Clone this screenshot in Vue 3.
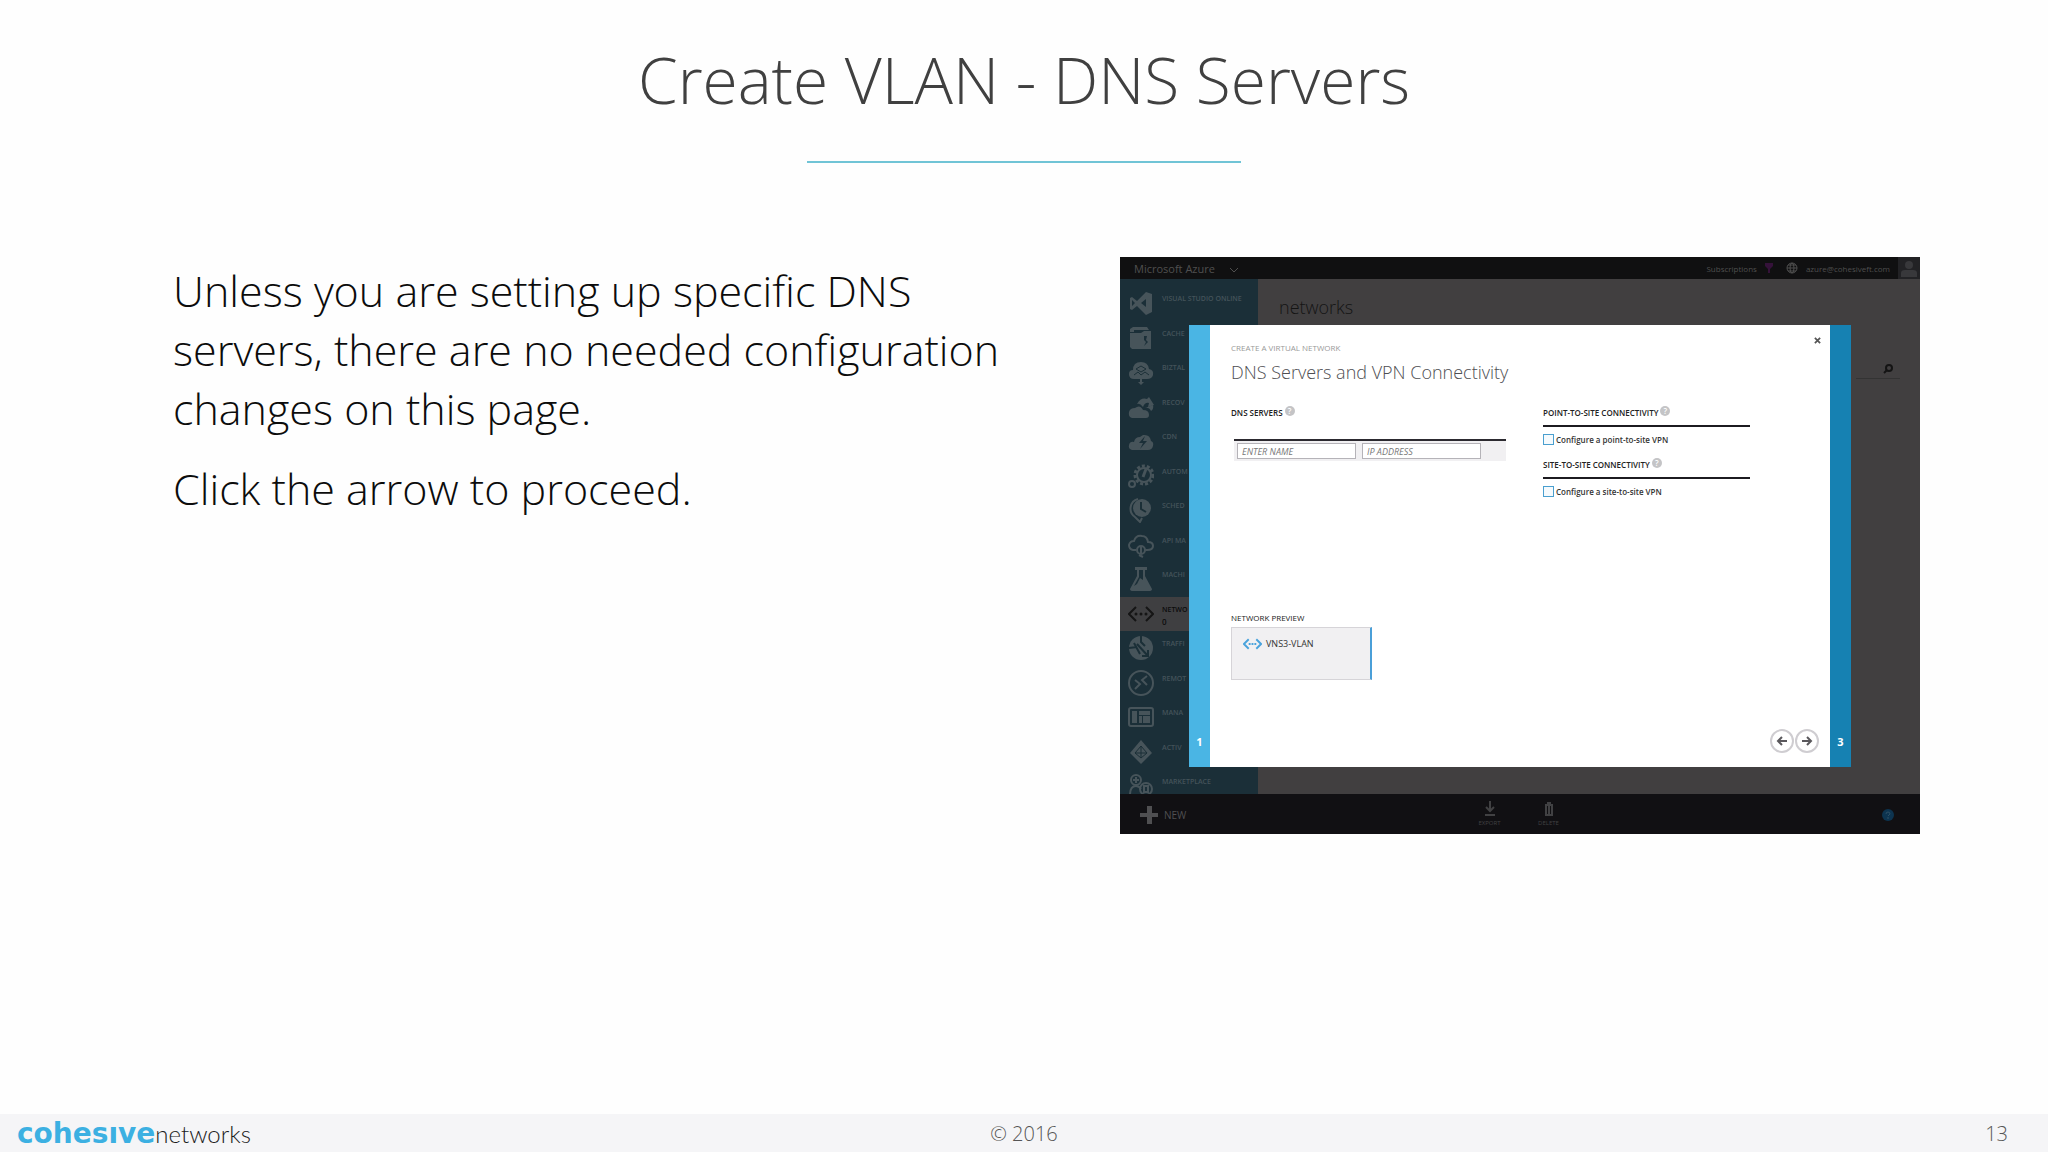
<script setup>
const services = [
  { label: 'VISUAL STUDIO ONLINE', icon: 'vs' },
  { label: 'CACHE', icon: 'cache' },
  { label: 'BIZTAL', icon: 'biztalk' },
  { label: 'RECOV', icon: 'recovery' },
  { label: 'CDN', icon: 'cdn' },
  { label: 'AUTOM', icon: 'automation' },
  { label: 'SCHED', icon: 'scheduler' },
  { label: 'API MA', icon: 'api' },
  { label: 'MACHI', icon: 'flask' },
  { label: 'NETWO', icon: 'networks', count: 0, active: true },
  { label: 'TRAFFI', icon: 'traffic' },
  { label: 'REMOT', icon: 'remote' },
  { label: 'MANA', icon: 'management' },
  { label: 'ACTIV', icon: 'directory' },
  { label: 'MARKETPLACE', icon: 'market' }
]
</script>

<template>
  <div class="slide">
    <header class="heading">
      <h1>Create VLAN - DNS Servers</h1>
      <hr />
    </header>

    <main class="content">
      <section class="copy">
        <p>Unless you are setting up specific DNS servers, there are no needed configuration changes on this page.</p>
        <p>Click the arrow to proceed.</p>
      </section>

      <section class="portal" aria-label="Microsoft Azure portal">
        <div class="topbar">
          <span class="brand">Microsoft Azure</span>
          <svg class="chev" viewBox="0 0 10 6"><path d="M1 1l4 4 4-4" fill="none" stroke="currentColor" /></svg>
          <span class="push">Subscriptions</span>
          <svg class="filter" viewBox="0 0 10 12"><path d="M1 1h8v3L6 7v4H4V7L1 4z" fill="#35123a" /></svg>
          <svg class="globe" viewBox="0 0 12 12" fill="none" stroke="currentColor"><circle cx="6" cy="6" r="5" /><ellipse cx="6" cy="6" rx="2" ry="5" /><path d="M1 6h10M2 3h8M2 9h8" /></svg>
          <span class="mail">azure@cohesiveft.com</span>
          <span class="avatar"><svg viewBox="0 0 18 20"><circle cx="9" cy="7" r="4" /><path d="M1 19v-4q0-3 4-3h8q4 0 4 3v4z" /></svg></span>
        </div>

        <div class="workspace">
          <nav class="sidebar">
            <ul>
              <li v-for="s in services" :key="s.label" :class="{ active: s.active }">
                <svg viewBox="0 0 26 26" fill="currentColor">
                  <path v-if="s.icon === 'vs'" fill-rule="evenodd" d="M18 2l6 2v18l-6 3-9-9-5 4-2-1V8l2-1 5 4zM18 9l-5 4 5 4zM4 10v6l3-3z" />
                  <g v-else-if="s.icon === 'cache'">
                    <path d="M5 2h14l2 3H6v2H2V4z" />
                    <path fill-rule="evenodd" d="M2 8h11l3-2h7v18H4l-2-2zM16 11v4l2 2-2 4 4-4-2-2 1-4z" />
                  </g>
                  <g v-else-if="s.icon === 'biztalk'">
                    <path d="M6 20q-5 0-5-5 0-4 4-4 0-8 8-8 7 0 8 7 5 1 4 6-1 4-6 4z" />
                    <path d="M8 10l5-3 5 3-5 3zM6 16l4-3 3 3 4-3 4 3" fill="none" stroke="#1b2f37" />
                    <path d="M12 20h2v3h2l-3 3-3-3h2z" />
                  </g>
                  <g v-else-if="s.icon === 'recovery'">
                    <path d="M4 24q-4-1-3-6 1-4 6-4 5-4 8 2 6 0 6 5 0 3-3 3z" />
                    <path d="M9 10q4-7 10-5l2-2 5 8-6 2 1-4q-4-1-6 4-3-4-6-3z" />
                    <path d="M17 14q4-1 6 3 3-2 2-6z" />
                  </g>
                  <path v-else-if="s.icon === 'cdn'" fill-rule="evenodd" d="M4 22q-4-1-3-5 1-4 5-3 1-5 6-5l3-2q7-1 8 6 3 1 2 5-1 4-5 4zM17 8l-6 7h4l-3 6 7-8h-4z" />
                  <g v-else-if="s.icon === 'automation'" fill="none" stroke="currentColor">
                    <circle cx="16" cy="12" r="9" stroke-width="3" stroke-dasharray="3 2" />
                    <circle cx="16" cy="12" r="7" stroke-width="2" />
                    <path d="M15 14l3-8" stroke-width="3" />
                    <circle cx="4" cy="21" r="3" stroke-width="2" />
                  </g>
                  <g v-else-if="s.icon === 'scheduler'">
                    <path d="M10 2A10 10 0 0 0 7 20l5 5 2-4" fill="none" stroke="currentColor" stroke-width="2" />
                    <circle cx="14" cy="11" r="9" />
                    <path d="M13 5v7l5 3" fill="none" stroke="#1b2f37" stroke-width="2" />
                  </g>
                  <g v-else-if="s.icon === 'api'" fill="none" stroke="currentColor" stroke-width="2">
                    <path d="M8 18H5q-4-1-4-5 1-4 5-4 2-6 8-5 5 0 6 6 5 0 5 4 0 4-6 4h-2" />
                    <circle cx="13" cy="18" r="4" /><path d="M13 15v6M11 23l4 2" />
                  </g>
                  <path v-else-if="s.icon === 'flask'" fill-rule="evenodd" d="M7 1h12v3h-2v6l7 13q0 2-3 2H5q-3 0-3-2l7-13V4H7zM11 4v7l-5 9 3-2 3-6 3 2V4z" />
                  <g v-else-if="s.icon === 'networks'">
                    <path d="M8 6l-7 7 7 7M18 6l7 7-7 7" fill="none" stroke="currentColor" stroke-width="2" />
                    <circle cx="8" cy="13" r="1.5" /><circle cx="13" cy="13" r="1.5" /><circle cx="18" cy="13" r="1.5" />
                  </g>
                  <g v-else-if="s.icon === 'traffic'">
                    <circle cx="13" cy="13" r="12" />
                    <path d="M13 1v6l4 4M1 13l8-1M9 9l11 12M20 15v6h-6M6 8l6 11" fill="none" stroke="#1b2f37" stroke-width="2" />
                  </g>
                  <g v-else-if="s.icon === 'remote'" fill="none" stroke="currentColor">
                    <circle cx="13" cy="13" r="12" stroke-width="2" />
                    <path d="M7 10l5 4-5 5M19 6l-5 4 5 5" stroke-width="2" />
                  </g>
                  <g v-else-if="s.icon === 'management'">
                    <rect x="1" y="4" width="24" height="18" rx="2" fill="none" stroke="currentColor" stroke-width="2" />
                    <path d="M4 7h5v12H4zM11 7h11v4H11zM11 12h3v7h-3zM15 12h7v7h-7z" />
                  </g>
                  <g v-else-if="s.icon === 'directory'">
                    <path d="M13 1l11 13-11 11L2 14z" />
                    <path d="M13 7l-6 7 6 5 6-5zM13 7v12M7 14h12" fill="none" stroke="#1b2f37" />
                  </g>
                  <g v-else fill="none" stroke="currentColor" stroke-width="2">
                    <circle cx="8" cy="7" r="5" /><path d="M2 22q0-9 6-9 3 0 5 3M8 4v6M5 7h6" />
                    <circle cx="18" cy="16" r="6" /><path d="M16 13v6h4v-6z" />
                  </g>
                </svg>
                <span>{{ s.label }}<small v-if="s.active">{{ s.count }}</small></span>
              </li>
            </ul>
          </nav>
          <div class="page">
            <h2>networks</h2>
            <div class="search"><svg viewBox="0 0 10 10" fill="none" stroke="currentColor" stroke-width="2"><circle cx="6" cy="4" r="3" /><path d="M4 6L1 9" /></svg></div>
          </div>
        </div>

        <div class="commands">
          <button class="new"><svg viewBox="0 0 18 18"><path d="M7 0h5v7h6v4h-6v7H7v-7H0V7h7z" fill="currentColor" /></svg>NEW</button>
          <div class="actions">
            <button><svg viewBox="0 0 14 16" fill="none" stroke="currentColor" stroke-width="2"><path d="M7 0v10M3 6l4 4 4-4M2 14h10" /></svg>EXPORT</button>
            <button><svg viewBox="0 0 14 16" fill="none" stroke="currentColor" stroke-width="2"><path d="M4 4h6v10H4zM5 2h4M7 5v8" /></svg>DELETE</button>
          </div>
          <button class="help" aria-label="Help"><svg viewBox="0 0 12 12"><circle cx="6" cy="6" r="6" fill="#0d3450" /><path d="M4 5q0-2 2-2t2 2L6 7M6 8v2" fill="none" stroke="#2e5065" /></svg></button>
        </div>

        <div class="dialog" role="dialog" aria-labelledby="dialog-title">
          <div class="step prev">1</div>
          <form class="form" @submit.prevent>
            <button type="button" class="close" aria-label="Close"><svg viewBox="0 0 8 8"><path d="M1 1l6 6M7 1L1 7" stroke="currentColor" stroke-width="2" /></svg></button>
            <div class="kicker">CREATE A VIRTUAL NETWORK</div>
            <h3 id="dialog-title">DNS Servers and VPN Connectivity</h3>
            <div class="cols">
              <fieldset class="dns">
                <legend>DNS SERVERS<i class="q">?</i></legend>
                <div class="row">
                  <input type="text" placeholder="ENTER NAME" aria-label="DNS server name" />
                  <input type="text" placeholder="IP ADDRESS" aria-label="DNS server IP address" />
                </div>
              </fieldset>
              <div class="vpn">
                <fieldset>
                  <legend>POINT-TO-SITE CONNECTIVITY<i class="q">?</i></legend>
                  <label><input type="checkbox" />Configure a point-to-site VPN</label>
                </fieldset>
                <fieldset>
                  <legend>SITE-TO-SITE CONNECTIVITY<i class="q">?</i></legend>
                  <label><input type="checkbox" />Configure a site-to-site VPN</label>
                </fieldset>
              </div>
            </div>
            <div class="preview">
              <h4>NETWORK PREVIEW</h4>
              <div class="card">
                <svg viewBox="0 0 20 12"><path d="M6 1L1 6l5 5M14 1l5 5-5 5" fill="none" stroke="#4aa3dc" stroke-width="2" /><path d="M6 5h2v2H6zM9 5h2v2H9zM12 5h2v2h-2z" fill="#4aa3dc" /></svg>
                VNS3-VLAN
              </div>
            </div>
            <div class="pager">
              <button type="button" aria-label="Back"><svg viewBox="0 0 24 24"><circle cx="12" cy="12" r="11" /><path d="M17 12H8M12 8l-4 4 4 4" /></svg></button>
              <button type="button" aria-label="Next"><svg viewBox="0 0 24 24"><circle cx="12" cy="12" r="11" /><path d="M7 12h9M12 8l4 4-4 4" /></svg></button>
            </div>
          </form>
          <div class="step next">3</div>
        </div>
      </section>
    </main>

    <footer class="footer">
      <div class="logo" aria-label="cohesive networks"><b>cohesıve</b><span>networks</span></div>
      <span>© 2016</span>
      <span class="number">13</span>
    </footer>
  </div>
</template>

<style>
body { margin: 0; background: #fefefe; }
</style>

<style scoped>
* { box-sizing: border-box; }
.slide { min-height: 100vh; display: flex; flex-direction: column; font-family: "Open Sans", "Noto Sans", sans-serif; color: #0c0c0c; }
h1, h2, h3, h4, p, ul, fieldset { margin: 0; padding: 0; border: 0; min-width: 0; }
h1, h2, h3 { font-weight: 300; }
button { border: 0; padding: 0; background: none; font: inherit; color: inherit; display: flex; align-items: center; }
svg { display: block; flex: none; }

.heading { padding-top: 36px; text-align: center; }
h1 { font-size: 64px; line-height: 88px; color: #404040; }
hr { width: 434px; height: 2px; margin: 37px auto 0; border: 0; background: #70c4d6; }

.content { flex: 1; display: flex; align-items: flex-start; justify-content: space-between; padding: 94px 128px 40px 173px; }
.copy { flex: 0 1 840px; padding-top: 4px; font-size: 43px; line-height: 59px; font-weight: 300; }
.copy p + p { margin-top: 21px; }

.portal { position: relative; flex: 0 1 800px; overflow: hidden; background: #111013; color: #555; }
.topbar { display: flex; align-items: center; height: 22px; font-size: 8px; background: #101011; color: #4f4f4f; }
.brand { margin-left: 14px; font-size: 11px; }
.chev { width: 10px; height: 6px; margin: 3px 0 0 14px; }
.push { margin-left: auto; }
.filter { width: 10px; height: 12px; margin: 0 12px 0 7px; }
.globe { width: 12px; height: 12px; margin-right: 8px; }
.avatar { width: 22px; height: 22px; margin-left: 8px; padding: 1px 2px; background: #222225; }
.avatar svg { width: 18px; height: 20px; fill: #38383b; }

.workspace { display: flex; height: 515px; overflow: hidden; }
.sidebar { width: 138px; padding-top: 7px; background: #1b2f38; }
.sidebar ul { display: grid; grid-auto-rows: 1fr; height: 518px; list-style: none; }
.sidebar li { display: flex; gap: 8px; padding: 4px 0 0 8px; font-size: 7px; font-weight: 600; line-height: 18px; white-space: nowrap; color: #44535a; }
.sidebar li svg { width: 26px; height: 26px; color: #47545a; }
.sidebar small { display: block; font-size: 8px; line-height: 6px; }
.sidebar li.active { background: #3f3f41; color: #0c0c0c; }
.sidebar li.active svg { color: #151515; }
.page { flex: 1; padding: 15px 20px 0 21px; background: #413f40; color: #141414; }
h2 { font-size: 18px; line-height: 26px; }
.search { display: flex; justify-content: flex-end; width: 44px; margin: 44px 0 0 auto; padding: 0 7px 4px 0; border-bottom: 1px solid #333; }
.search svg { width: 10px; height: 10px; }

.commands { display: flex; align-items: center; height: 40px; padding: 2px 26px 0 20px; color: #4f4f51; }
.new { gap: 6px; font-size: 10px; width: 130px; }
.new svg { width: 18px; height: 18px; }
.actions { display: flex; gap: 32px; margin-left: 206px; padding-bottom: 2px; font-size: 6px; color: #414143; }
.actions button { flex-direction: column; gap: 2px; width: 27px; }
.actions svg { width: 14px; height: 16px; }
.help { margin-left: auto; }
.help svg { width: 12px; height: 12px; }

.dialog { position: absolute; top: 68px; left: 69px; right: 69px; bottom: 67px; display: flex; background: #fff; }
.step { width: 21px; flex: none; display: flex; align-items: flex-end; justify-content: center; padding-bottom: 17px; font-size: 11px; line-height: 16px; font-weight: 700; color: #fff; }
.prev { background: #4ab5e4; }
.next { background: #1681b2; }
.form { position: relative; flex: 1; display: flex; flex-direction: column; padding: 17px 11px 14px 21px; color: #333; }
.close { position: absolute; top: 12px; right: 9px; color: #555; }
.close svg { width: 7px; height: 7px; }
.kicker { font-size: 8px; line-height: 12px; font-weight: 500; color: #999; }
h3 { margin-top: 6px; font-size: 18px; line-height: 24px; color: #4e4e52; }
.cols { display: flex; justify-content: space-between; padding: 21px 69px 0 0; }
legend { display: flex; gap: 2px; padding: 0; font-size: 8px; line-height: 16px; font-weight: 600; white-space: nowrap; color: #222; }
.q { width: 10px; height: 10px; margin-top: 1px; border-radius: 50%; background: #c4c4c6; color: #fff; font-size: 8px; line-height: 10px; font-style: normal; text-align: center; }
.dns { width: 275px; }
.row { display: flex; gap: 6px; margin: 18px 0 0 3px; padding: 2px 3px; border-top: 2px solid #2c2a30; background: #f1f0f2; }
.row input { width: 119px; height: 16px; padding: 0 4px; border: 1px solid #b5b3b8; border-radius: 0; background: #fff; font: italic 9px "Open Sans", sans-serif; }
.row input::placeholder { color: #777; opacity: 1; }
.vpn { width: 207px; }
.vpn fieldset { height: 52px; }
.vpn label { display: flex; align-items: center; gap: 2px; margin-top: 4px; padding-top: 7px; border-top: 2px solid #1c1b20; font-size: 8px; line-height: 11px; font-weight: 600; }
.vpn input { appearance: none; width: 11px; height: 11px; margin: 0; border: 1px solid #4a9fcf; background: #f5fafd; }
.preview { margin-top: auto; }
h4 { font-size: 8px; line-height: 12px; font-weight: 500; color: #222; }
.card { display: flex; align-items: flex-start; gap: 4px; width: 141px; height: 53px; margin-top: 3px; padding: 10px 11px; border: 1px solid #d6d4d8; border-right: 2px solid #4a9fd8; background: #f1f0f2; font-size: 9px; line-height: 12px; font-weight: 500; }
.card svg { width: 19px; height: 12px; }
.pager { display: flex; justify-content: flex-end; gap: 1px; margin-top: 49px; }
.pager svg { width: 24px; height: 24px; fill: none; stroke: #5a585c; stroke-width: 2; }
.pager circle { stroke: #cfcdd1; }

.footer { display: grid; grid-template-columns: 1fr auto 1fr; align-items: center; height: 38px; padding: 0 17px; background: #f5f5f7; font-size: 20px; font-weight: 300; color: #555; }
.number { padding-right: 23px; text-align: right; }
.logo { display: flex; align-items: baseline; }
.logo b { font: 700 28px "DejaVu Sans", sans-serif; color: #3cb0e2; }
.logo span { font: 300 24px Lato, sans-serif; color: #1c1c1c; }
</style>
